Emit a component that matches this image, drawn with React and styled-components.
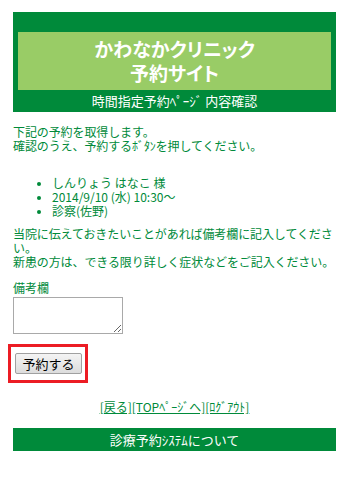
import React from "react";
import styled, { createGlobalStyle } from "styled-components";

const GlobalStyle = createGlobalStyle`
  body {
    margin: 0;
    background: #ffffff;
    font-family: "Noto Sans CJK JP", "Noto Sans", sans-serif;
    color: #008a3a;
  }
`;

const Page = styled.div`
  width: 323px;
  padding: 12px 13px 20px;
`;

const Header = styled.header`
  background: #008a3a;
  padding: 20px 5px 0;
`;

const TitleBox = styled.h1`
  margin: 0;
  background: #99cc66;
  color: #ffffff;
  font-size: 19px;
  font-weight: 700;
  line-height: 24px;
  padding: 5px 0;
  text-align: center;
  font-feature-settings: "palt";
`;

const SubTitle = styled.div`
  color: #ffffff;
  font-size: 13px;
  line-height: 22px;
  text-align: center;
`;

const Text = styled.p`
  margin: ${(props) => props.m || "0"};
  font-size: 12px;
  line-height: 14px;
  letter-spacing: -0.1px;
`;

const List = styled.ul`
  margin: 23px 0 9px;
  padding-left: 39px;
  font-size: 12px;
  line-height: 14px;
  li::marker {
    font-size: 10px;
  }
`;

const Label = styled.div`
  margin-top: 12px;
  font-size: 12px;
  line-height: 14px;
`;

const Memo = styled.textarea`
  display: block;
  margin: 2px 0 0;
  width: 110px;
  height: 37px;
  box-sizing: border-box;
  border: 1px solid #a9a9a9;
  padding: 2px;
  resize: both;
  font-family: inherit;
`;

const Mark = styled.div`
  margin: 10px 0 0 -5px;
  width: 80px;
  height: 39px;
  box-sizing: border-box;
  border: 3px solid #ec1c24;
  padding: 6px 0 0 4px;
`;

const Submit = styled.button`
  display: block;
  width: 67px;
  height: 21px;
  padding: 0;
  border: 1px solid #a0a0a0;
  border-radius: 2px;
  background: linear-gradient(#f4f4f4, #dcdcdc);
  font-family: inherit;
  font-size: 13px;
  line-height: 19px;
  color: #000000;
`;

const Links = styled.div`
  margin-top: 16px;
  font-size: 12px;
  line-height: 16px;
  text-align: center;
`;

const LinkText = styled.a`
  color: #008a3a;
  text-decoration: underline;
`;

const Footer = styled.div`
  margin-top: 13px;
  background: #008a3a;
  color: #ffffff;
  font-size: 13px;
  line-height: 23px;
  text-align: center;
`;

export default function App() {
  return (
    <>
      <GlobalStyle />
      <Page>
        <Header>
          <TitleBox>
            かわなかクリニック
            <br />
            予約サイト
          </TitleBox>
          <SubTitle>時間指定予約ﾍﾟｰｼﾞ 内容確認</SubTitle>
        </Header>

        <Text m="13px 0 0">
          下記の予約を取得します。
          <br />
          確認のうえ、予約するﾎﾞﾀﾝを押してください。
        </Text>

        <List>
          <li>しんりょう はなこ 様</li>
          <li>2014/9/10 (水) 10:30～</li>
          <li>診察(佐野)</li>
        </List>

        <Text>
          当院に伝えておきたいことがあれば備考欄に記入してください。
          <br />
          新患の方は、できる限り詳しく症状などをご記入ください。
        </Text>

        <Label>備考欄</Label>
        <Memo />

        <Mark>
          <Submit>予約する</Submit>
        </Mark>

        <Links>
          <LinkText href="#">[戻る]</LinkText>
          <LinkText href="#">[TOPﾍﾟｰｼﾞへ]</LinkText>
          <LinkText href="#">[ﾛｸﾞｱｳﾄ]</LinkText>
        </Links>

        <Footer>診療予約ｼｽﾃﾑについて</Footer>
      </Page>
    </>
  );
}
